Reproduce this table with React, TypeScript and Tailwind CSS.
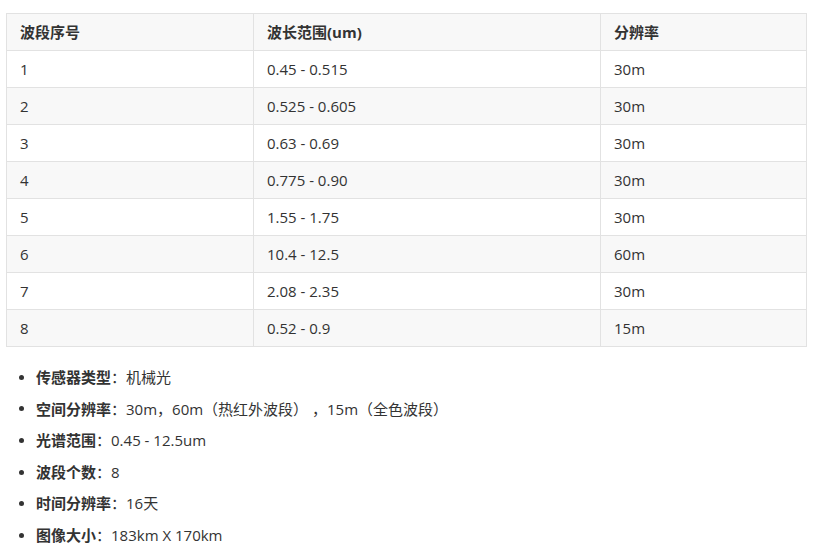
import React from "react";

const rows = [
  ["1", "0.45 - 0.515", "30m"],
  ["2", "0.525 - 0.605", "30m"],
  ["3", "0.63 - 0.69", "30m"],
  ["4", "0.775 - 0.90", "30m"],
  ["5", "1.55 - 1.75", "30m"],
  ["6", "10.4 - 12.5", "60m"],
  ["7", "2.08 - 2.35", "30m"],
  ["8", "0.52 - 0.9", "15m"],
];

const items: [string, string][] = [
  ["传感器类型", "机械光"],
  ["空间分辨率", "30m，60m（热红外波段） ，15m（全色波段）"],
  ["光谱范围", "0.45 - 12.5um"],
  ["波段个数", "8"],
  ["时间分辨率", "16天"],
  ["图像大小", "183km X 170km"],
];

export default function App() {
  return (
    <div
      className="w-[817px] h-[550px] bg-white text-[15px] text-[#333] overflow-hidden"
      style={{ fontFamily: '"Open Sans", "Noto Sans CJK SC", sans-serif' }}
    >
      <div className="pt-[13px] pl-[6px] pr-[11px]">
        <table className="w-[800px] border-collapse table-fixed">
          <colgroup>
            <col className="w-[247px]" />
            <col className="w-[347px]" />
            <col className="w-[206px]" />
          </colgroup>
          <thead>
            <tr className="h-[37px] bg-[#f8f8f8]">
              <th className="border border-[#e2e2e2] px-[13px] text-left font-bold">波段序号</th>
              <th className="border border-[#e2e2e2] px-[13px] text-left font-bold">波长范围(um)</th>
              <th className="border border-[#e2e2e2] px-[13px] text-left font-bold">分辨率</th>
            </tr>
          </thead>
          <tbody>
            {rows.map((r, i) => (
              <tr key={i} className={i % 2 === 1 ? "h-[37px] bg-[#f8f8f8]" : "h-[37px] bg-white"}>
                {r.map((c, j) => (
                  <td key={j} className="border border-[#e2e2e2] px-[13px] text-left">
                    {c}
                  </td>
                ))}
              </tr>
            ))}
          </tbody>
        </table>
      </div>
      <ul className="mt-[14.5px]">
        {items.map(([k, v], i) => (
          <li key={i} className="h-[31.6px] flex items-center pl-[19px] whitespace-pre">
            <span className="w-[5px] h-[5px] rounded-full bg-[#333] mr-[12px]" />
            <span className="font-bold">{k}</span>
            <span>：{v}</span>
          </li>
        ))}
      </ul>
    </div>
  );
}
